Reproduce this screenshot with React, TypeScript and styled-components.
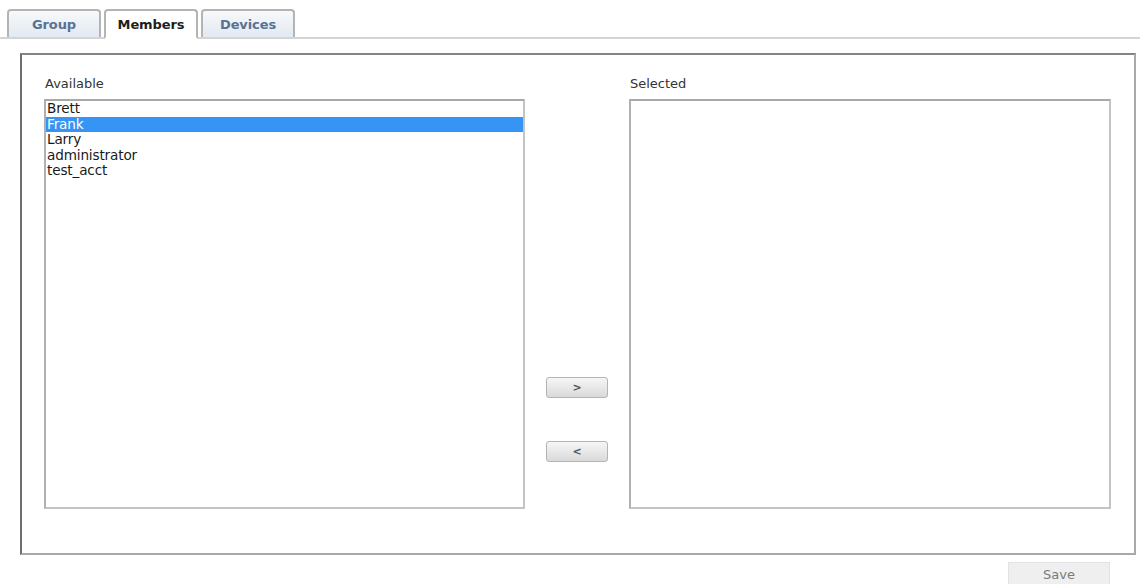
import React from "react";
import styled, { createGlobalStyle } from "styled-components";

const Global = createGlobalStyle`
  html, body { margin: 0; padding: 0; background: #ffffff; }
  body { font-family: "DejaVu Sans", Verdana, sans-serif; color: #222; overflow: hidden; }
  #root { width: 1140px; height: 584px; }
`;

const Page = styled.div`
  width: 1140px;
  height: 584px;
  display: flex;
  flex-direction: column;
`;

const TabBar = styled.div`
  display: flex;
  align-items: flex-end;
  gap: 3px;
  height: 37px;
  flex-shrink: 0;
  padding-left: 7px;
  border-bottom: 2px solid #d4d4d4;
  box-sizing: content-box;
`;

const Tab = styled.div<{ $active?: boolean }>`
  width: 94px;
  box-sizing: border-box;
  display: flex;
  align-items: center;
  justify-content: center;
  font-family: "DejaVu Sans", Verdana, sans-serif;
  font-weight: bold;
  font-size: 13px;
  letter-spacing: -0.1px;
  color: ${(p) => (p.$active ? "#1e1e1e" : "#587295")};
  background: ${(p) =>
    p.$active ? "#ffffff" : "linear-gradient(#f7f9fb, #e2e9f0)"};
  border: 2px solid #b4b4b4;
  border-bottom: ${(p) => (p.$active ? "2px solid #ffffff" : "none")};
  margin-bottom: ${(p) => (p.$active ? "-2px" : "0")};
  height: ${(p) => (p.$active ? "30px" : "28px")};
  border-radius: 4px 4px 0 0;
`;

const Panel = styled.div`
  margin: 14px 4px 0 20px;
  height: 502px;
  flex-shrink: 0;
  box-sizing: border-box;
  border: 2px solid #a9a9a9;
  border-top-color: #858585;
  border-left-color: #6f6f6f;
  display: grid;
  grid-template-columns: 481px 104px 482px;
  padding: 20px 0 0 22px;
`;

const Column = styled.div`
  display: flex;
  flex-direction: column;
`;

const Label = styled.div`
  font-size: 13px;
  color: #333;
  height: 24px;
  line-height: 18px;
  padding-left: 1px;
`;

const ListBox = styled.div`
  height: 410px;
  box-sizing: border-box;
  border: 2px solid #c4c4c4;
  border-top-color: #a8a8a8;
  border-left-color: #b0b0b0;
  background: #fff;
`;

const Item = styled.div<{ $selected?: boolean }>`
  font-size: 13.6px;
  line-height: 15.6px;
  height: 15.6px;
  padding-left: 1px;
  letter-spacing: -0.15px;
  color: ${(p) => (p.$selected ? "#ffffff" : "#1a1a1a")};
  background: ${(p) => (p.$selected ? "#3594f4" : "transparent")};
  white-space: nowrap;
`;

const Middle = styled.div`
  display: flex;
  flex-direction: column;
  align-items: center;
  padding-top: 302px;
  gap: 43px;
`;

const MoveButton = styled.button`
  width: 62px;
  height: 21px;
  padding: 0;
  border: 1px solid #b4b4b4;
  border-radius: 3px;
  background: linear-gradient(#f6f6f6, #dadada);
  font-family: "DejaVu Sans", Verdana, sans-serif;
  font-size: 11px;
  font-weight: bold;
  color: #555;
  line-height: 19px;
`;

const Footer = styled.div`
  display: flex;
  flex-shrink: 0;
  justify-content: flex-end;
  padding: 7px 30px 0 0;
`;

const SaveButton = styled.button`
  width: 102px;
  height: 24px;
  border: 1px solid #e2e2e2;
  background: #efefef;
  font-family: "DejaVu Sans", Verdana, sans-serif;
  font-size: 13px;
  color: #7a7a7a;
  padding: 0;
`;

const users = ["Brett", "Frank", "Larry", "administrator", "test_acct"];

export default function App() {
  return (
    <Page>
      <Global />
      <TabBar>
        <Tab>Group</Tab>
        <Tab $active>Members</Tab>
        <Tab>Devices</Tab>
      </TabBar>
      <Panel>
        <Column>
          <Label>Available</Label>
          <ListBox>
            {users.map((u) => (
              <Item key={u} $selected={u === "Frank"}>
                {u}
              </Item>
            ))}
          </ListBox>
        </Column>
        <Middle>
          <MoveButton>&gt;</MoveButton>
          <MoveButton>&lt;</MoveButton>
        </Middle>
        <Column>
          <Label>Selected</Label>
          <ListBox />
        </Column>
      </Panel>
      <Footer>
        <SaveButton>Save</SaveButton>
      </Footer>
    </Page>
  );
}
